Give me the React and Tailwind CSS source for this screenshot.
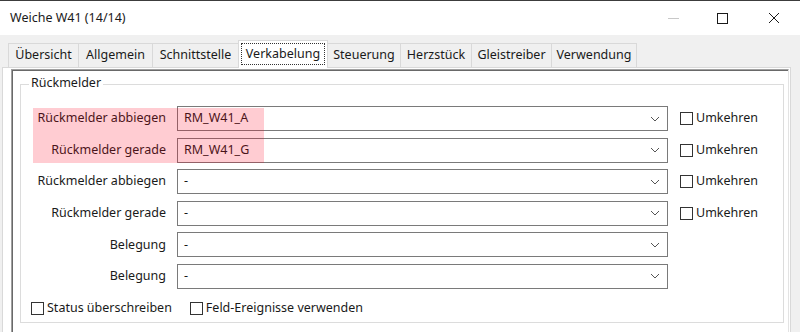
const tabs = [
  { name: "Übersicht", w: "w-[71px]" },
  { name: "Allgemein", w: "w-[75px]" },
  { name: "Schnittstelle", w: "w-[87px]" },
  { name: "Verkabelung", w: "w-[90px]" },
  { name: "Steuerung", w: "w-[74px]" },
  { name: "Herzstück", w: "w-[72px]" },
  { name: "Gleistreiber", w: "w-[81px]" },
  { name: "Verwendung", w: "w-[86px]" },
];

const rows = [
  { label: "Rückmelder abbiegen", value: "RM_W41_A", invert: true },
  { label: "Rückmelder gerade", value: "RM_W41_G", invert: true },
  { label: "Rückmelder abbiegen", value: "-", invert: true },
  { label: "Rückmelder gerade", value: "-", invert: true },
  { label: "Belegung", value: "-", invert: false },
  { label: "Belegung", value: "-", invert: false },
];

function Chevron() {
  return (
    <svg width="10" height="6" viewBox="0 0 10 6" className="shrink-0">
      <path d="M1 1 L5 5 L9 1" fill="none" stroke="#555" strokeWidth="1" />
    </svg>
  );
}

function CheckBox({ label }) {
  return (
    <label className="flex items-center gap-[3px] text-[#1a1a1a]">
      <span className="w-[13px] h-[13px] border border-[#333] bg-white shrink-0" />
      <span>{label}</span>
    </label>
  );
}

function ComboBox({ value }) {
  return (
    <div className="w-[491px] h-[25px] border border-[#7a7a7a] bg-white flex items-center justify-between pl-[6px] pr-[7px]">
      <span className="text-[#1a1a1a]">{value}</span>
      <Chevron />
    </div>
  );
}

export default function App() {
  return (
    <div
      className="w-[800px] h-[332px] overflow-hidden bg-[#f0f0f0] border-t border-[#3c3c3c] text-[12.5px] leading-none"
      style={{ fontFamily: '"Noto Sans", "Open Sans", sans-serif' }}
    >
      {/* title bar */}
      <div className="h-[34px] bg-white flex items-center justify-between pl-[10px]">
        <span className="text-[#1a1a1a]">Weiche W41 (14/14)</span>
        <div className="flex items-center h-full">
          <div className="w-[46px] h-full flex items-center justify-center">
            <span className="block w-[11px] h-px bg-[#c8c8c8]" />
          </div>
          <div className="w-[52px] h-full flex items-center justify-center">
            <span className="block w-[11px] h-[11px] border border-[#1a1a1a]" />
          </div>
          <div className="w-[52px] h-full flex items-center justify-center">
            <svg width="12" height="12" viewBox="0 0 12 12">
              <path d="M1 1 L11 11 M11 1 L1 11" stroke="#1a1a1a" strokeWidth="1" />
            </svg>
          </div>
        </div>
      </div>

      {/* tab strip */}
      <div className="pl-[8px] pt-[5px] flex items-end h-[32px] relative z-10">
        {tabs.map((t, i) =>
          t.name === "Verkabelung" ? (
            <div
              key={t.name}
              className={`${t.w} -ml-px h-[28px] bg-white border border-b-0 border-[#d9d9d9] px-[2px] pt-[2px] -mb-px`}
            >
              <div className="h-[22px] border border-dotted border-[#333] flex items-center justify-center text-[#1a1a1a]">
                {t.name}
              </div>
            </div>
          ) : (
            <div
              key={t.name}
              className={`${t.w} ${i === 0 ? "" : "-ml-px"} h-[24px] border border-b-0 border-[#d9d9d9] flex items-center justify-center text-[#1a1a1a] bg-[#f0f0f0]`}
            >
              {t.name}
            </div>
          )
        )}
      </div>

      {/* tab page */}
      <div className="ml-[2px] w-[789px] h-[280px] bg-white border border-[#d9d9d9] pl-[8px] pt-[1px] pr-[1px]">
        <div className="h-full border-t border-l border-r border-[#a0a0a0] border-r-[#e3e3e3]">
          <div className="h-full border-t border-l border-[#696969] pl-[7px] pr-[4px] pt-[13px]">
            {/* group box */}
            <div className="relative h-[239px] border border-[#dcdcdc]">
              <span className="absolute left-[8px] -top-[8px] bg-white px-[2px] text-[#1a1a1a]">
                Rückmelder
              </span>
              <div className="absolute left-[12px] top-[23px] w-[231px] h-[55px] bg-[rgba(255,0,30,0.2)] pointer-events-none" />
              <div className="pt-[21px] flex flex-col gap-[6.6px]">
                {rows.map((r, i) => (
                  <div key={i} className="flex items-center">
                    <div className="w-[145px] text-right text-[#1a1a1a]">{r.label}</div>
                    <div className="ml-[11px]">
                      <ComboBox value={r.value} />
                    </div>
                    {r.invert && (
                      <div className="ml-[12px]">
                        <CheckBox label="Umkehren" />
                      </div>
                    )}
                  </div>
                ))}
              </div>
              <div className="flex items-center gap-[18px] pl-[10px] mt-[13px]">
                <CheckBox label="Status überschreiben" />
                <CheckBox label="Feld-Ereignisse verwenden" />
              </div>
            </div>
          </div>
        </div>
      </div>
    </div>
  );
}
